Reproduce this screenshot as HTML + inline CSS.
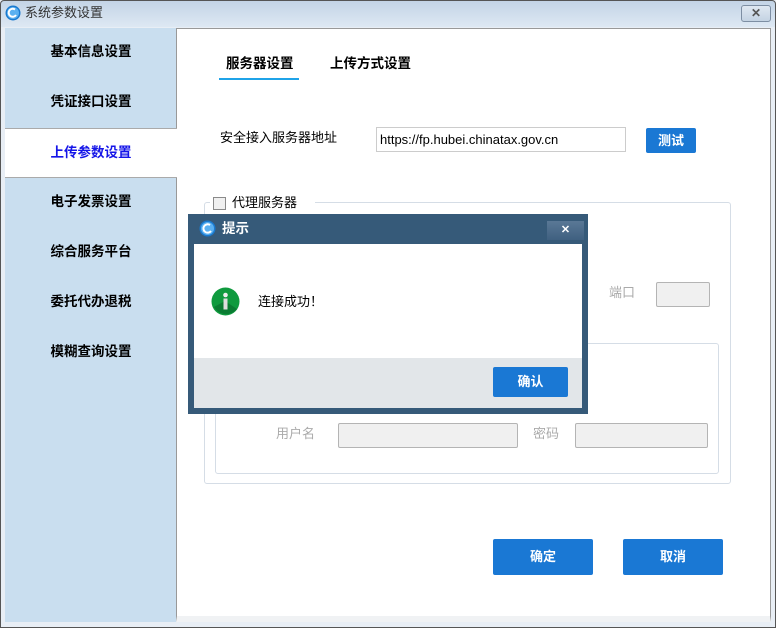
<!DOCTYPE html>
<html><head><meta charset="utf-8"><style>
*{margin:0;padding:0;box-sizing:border-box}
body{width:776px;height:628px;overflow:hidden;position:relative;background:#e9eef4;font-family:"Liberation Sans","Noto Sans CJK SC",sans-serif;font-size:13px;color:#000;line-height:16px}
.a{position:absolute}
.win{left:0;top:0;width:776px;height:628px;border:1px solid #555;border-radius:4px 4px 0 0;background:linear-gradient(#c3d4e6,#dde8f3 26px,#e8eef5 26px)}
.side{left:5px;top:28px;width:172px;height:594px;background:#c9deef}
.item{left:5px;width:172px;height:50px;line-height:48px;text-align:center;font-weight:bold;font-size:13.5px}
.main{left:176px;top:28px;width:595px;height:594px;background:#fff;border:1px solid #999;border-bottom:6px solid #f0f2f4}
.btn{background:#1a78d4;color:#fff;font-weight:bold;text-align:center;border-radius:2px}
.gray{color:#aaa}
.inp{background:#f0f0f0;border:1px solid #b4b4b4;border-radius:2px}
</style></head><body>
<div class="a win"></div>
<svg class="a" style="left:5px;top:5px" width="16" height="16"><circle cx="8" cy="8" r="7.5" fill="#1a7ad0"/><circle cx="8" cy="8" r="6" fill="#5bb0f0"/><path d="M10 4.5A4 4 0 1 0 11 10" stroke="#fff" stroke-width="2" fill="none"/></svg>
<div class="a" style="left:25px;top:5px;color:#333;font-size:13px">系统参数设置</div>
<div class="a" style="left:741px;top:5px;width:30px;height:17px;border:1px solid #7d8ea3;border-radius:3px;background:linear-gradient(#dfe8f2,#c4d3e3);text-align:center;line-height:14px;font-weight:bold;color:#555;font-size:12px">✕</div>
<div class="a side"></div>
<div class="a main"></div>
<div class="a item" style="top:28px">基本信息设置</div>
<div class="a item" style="top:78px">凭证接口设置</div>
<div class="a item" style="top:128px;background:#fff;color:#1515e8;border-top:1px solid #aaa;border-bottom:1px solid #aaa">上传参数设置</div>
<div class="a item" style="top:178px">电子发票设置</div>
<div class="a item" style="top:228px">综合服务平台</div>
<div class="a item" style="top:278px">委托代办退税</div>
<div class="a item" style="top:328px">模糊查询设置</div>

<div class="a" style="left:226px;top:56px;font-weight:bold;font-size:13.5px">服务器设置</div>
<div class="a" style="left:219px;top:78px;width:80px;height:2px;background:#1fa3e8"></div>
<div class="a" style="left:330px;top:56px;font-weight:bold;font-size:13.5px">上传方式设置</div>
<div class="a" style="left:220px;top:130px">安全接入服务器地址</div>
<div class="a" style="left:376px;top:127px;width:250px;height:25px;border:1px solid #ccc;padding:4px 3px;font-size:13px">https://fp.hubei.chinatax.gov.cn</div>
<div class="a btn" style="left:646px;top:128px;width:50px;height:25px;line-height:25px">测试</div>

<div class="a" style="left:204px;top:202px;width:527px;height:282px;border:1px solid #d5dde6;border-radius:3px"></div>
<div class="a" style="left:210px;top:195px;width:105px;height:16px;background:#fff"></div>
<div class="a" style="left:213px;top:197px;width:13px;height:13px;border:1px solid #8a8a8a;background:#f0f0f0"></div>
<div class="a" style="left:232px;top:195px">代理服务器</div>
<div class="a" style="left:215px;top:343px;width:504px;height:131px;border:1px solid #d5dde6;border-radius:3px"></div>
<div class="a gray" style="left:609px;top:285px">端口</div>
<div class="a inp" style="left:656px;top:282px;width:54px;height:25px"></div>
<div class="a gray" style="left:276px;top:426px">用户名</div>
<div class="a inp" style="left:338px;top:423px;width:180px;height:25px"></div>
<div class="a gray" style="left:533px;top:426px">密码</div>
<div class="a inp" style="left:575px;top:423px;width:133px;height:25px"></div>

<div class="a btn" style="left:493px;top:539px;width:100px;height:36px;line-height:36px">确定</div>
<div class="a btn" style="left:623px;top:539px;width:100px;height:36px;line-height:36px">取消</div>

<div class="a" style="left:188px;top:214px;width:400px;height:200px;background:#365a79"></div>
<svg class="a" style="left:199px;top:220px" width="17" height="17"><circle cx="8.5" cy="8.5" r="8" fill="#1a7ad0"/><circle cx="8.5" cy="8.5" r="6.5" fill="#5bb0f0"/><path d="M11 5A4.2 4.2 0 1 0 12 11" stroke="#fff" stroke-width="2" fill="none"/></svg>
<div class="a" style="left:222px;top:221px;color:#fff;font-weight:bold;font-size:13.5px">提示</div>
<div class="a" style="left:547px;top:221px;width:37px;height:19px;background:linear-gradient(#5a7896,#3f6080);color:#fff;text-align:center;font-weight:bold;line-height:18px;font-size:11px">✕</div>
<div class="a" style="left:194px;top:244px;width:388px;height:114px;background:#fff"></div>
<div class="a" style="left:194px;top:358px;width:388px;height:50px;background:#e2e6e9"></div>
<svg class="a" style="left:211px;top:287px" width="29" height="29"><circle cx="14.5" cy="14.5" r="14" fill="#0f9a3e"/><path d="M3 20A14 14 0 0 0 26 22L14 14Z" fill="#0a7c32"/><circle cx="14.5" cy="8" r="2.3" fill="#eee"/><rect x="12.5" y="11.5" width="4" height="11" fill="#ddd"/></svg>
<div class="a" style="left:258px;top:293px;font-family:'Noto Sans CJK SC',sans-serif">连接成功！</div>
<div class="a btn" style="left:493px;top:367px;width:75px;height:30px;line-height:30px">确认</div>
</body></html>
